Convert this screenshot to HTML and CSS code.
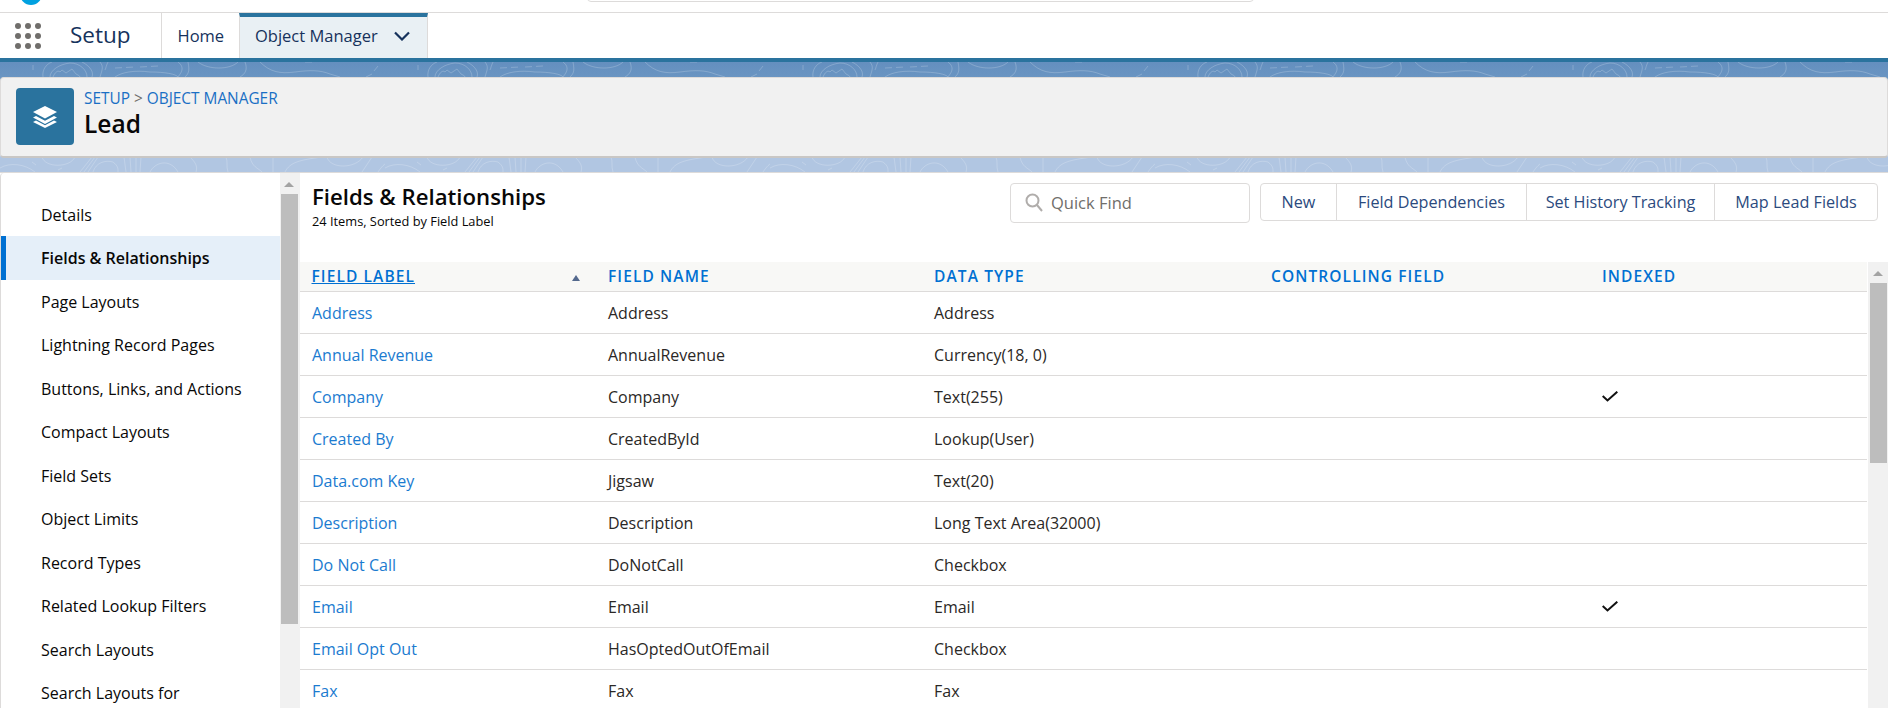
FILE: index.html
```html
<!DOCTYPE html>
<html lang="en">
<head>
<meta charset="utf-8">
<title>Lead | Object Manager</title>
<link rel="stylesheet" href="styles.css">
</head>
<body>
<div class="top-strip">
  <div class="logo-clip"><span class="logo"></span></div>
  <div class="global-search"></div>
</div>
<nav class="nav">
  <div class="launcher">
    <svg width="26" height="26" viewBox="0 0 26 26" fill="#706e6b"><circle cx="3" cy="3" r="3"/><circle cx="13" cy="3" r="3"/><circle cx="23" cy="3" r="3"/><circle cx="3" cy="13" r="3"/><circle cx="13" cy="13" r="3"/><circle cx="23" cy="13" r="3"/><circle cx="3" cy="23" r="3"/><circle cx="13" cy="23" r="3"/><circle cx="23" cy="23" r="3"/></svg>
  </div>
  <div class="app-name">Setup</div>
  <div class="tab">Home</div>
  <div class="tab tab-active">Object Manager
    <svg class="chev" width="16" height="10" viewBox="0 0 16 10" fill="none" stroke="#16325c" stroke-width="2.2"><path d="M1 1.5 8 8.5 15 1.5"/></svg>
  </div>
</nav>
<div class="stage">
  <svg class="texture" width="1888" height="110" aria-hidden="true">
    <defs>
      <pattern id="topo" width="385" height="110" patternUnits="userSpaceOnUse">
        <g fill="none" stroke="#fff" stroke-opacity=".2" stroke-width="1">
          <path d="M33 3V8M43 15C42 8 46 2 52 0M82 0C90 4 94 10 92 15"/>
          <path d="M50 15C50 8 60 2 70 1C80 1 87 8 87 15"/>
          <path d="M53 15C55 10 58 8 60 10L62 8 66 11 72 7 76 12C78 13 80 14 80 15"/>
          <path d="M100 0C104 5 102 8 100 15M108 0C106 4 106 6 105 8"/>
          <path d="M115 6 135 5M140 5 158 4" stroke-dasharray="7 4"/>
          <path d="M115 15C122 10 135 8 150 10C165 10 176 12 178 15"/>
          <path d="M178 0C186 6 180 12 178 15M188 0C190 10 188 12 185 15"/>
          <path d="M198 0C208 8 230 8 238 0M245 0C248 8 245 12 240 15"/>
          <path d="M260 0C270 10 280 12 295 10C310 8 320 8 330 12L340 15M305 0H312"/>
          <path d="M366 15 372 12M374 9 378 4"/>
          <path d="M0 106C10 100 25 102 35 110M42 95C45 106 70 106 75 95M32 100 36 103M58 108 62 106"/>
          <path d="M80 110 92 95M84 110 95 95M88 110 98 95"/>
          <path d="M93 110C96 100 106 98 113 100C118 104 118 106 118 110"/>
          <path d="M124 95 126 110M130 95 131 110M136 95V110M141 95 140 110"/>
          <path d="M150 110C155 100 170 96 178 110M190 95C195 100 198 104 196 110"/>
          <path d="M228 110C226 104 228 100 226 95M250 95C252 105 258 106 262 110M273 95V110"/>
          <path d="M285 110C290 100 300 98 322 95M327 95C330 107 355 107 363 95M362 110 372 95"/>
          <path d="M378 110C382 104 385 102 385 102"/>
        </g>
      </pattern>
    </defs>
    <rect width="1888" height="110" fill="url(#topo)"/>
  </svg>
  <header class="object-bar">
    <div class="object-icon">
      <svg width="24" height="22" viewBox="0 0 24 22" fill="#fff"><path d="M12 0 24 6 12 12.5 0 6Z"/><path d="M3 10 12 14.8 21 10 24 11.6 12 18 0 11.6Z"/><path d="M3 14.6 12 19.2 21 14.6 24 16 12 22 0 16Z"/></svg>
    </div>
    <div class="object-text">
      <div class="crumbs"><a>SETUP</a> <span class="crumb-sep">&gt;</span> <a>OBJECT MANAGER</a></div>
      <h1 class="object-title">Lead</h1>
    </div>
  </header>
  <div class="content">
    <aside class="side">
      <ul class="side-list">
        <li>Details</li>
        <li class="on">Fields &amp; Relationships</li>
        <li>Page Layouts</li>
        <li>Lightning Record Pages</li>
        <li>Buttons, Links, and Actions</li>
        <li>Compact Layouts</li>
        <li>Field Sets</li>
        <li>Object Limits</li>
        <li>Record Types</li>
        <li>Related Lookup Filters</li>
        <li>Search Layouts</li>
        <li>Search Layouts for</li>
      </ul>
      <div class="scrollbar side-scroll"><span class="arrow"></span><span class="thumb"></span></div>
    </aside>
    <main class="main">
      <div class="main-head">
        <div class="heading">
          <h2>Fields &amp; Relationships</h2>
          <p>24 Items, Sorted by Field Label</p>
        </div>
        <div class="tools">
          <div class="quick">
            <svg width="18" height="19" viewBox="0 0 18 19" fill="none" stroke="#b0adab" stroke-width="2"><circle cx="7.5" cy="7.5" r="6"/><path d="M12 12 17 18"/></svg>
            <span>Quick Find</span>
          </div>
          <div class="btn-group">
            <span class="btn btn-new">New</span>
            <span class="btn btn-dep">Field Dependencies</span>
            <span class="btn btn-his">Set History Tracking</span>
            <span class="btn btn-map">Map Lead Fields</span>
          </div>
        </div>
      </div>
      <div class="table-wrap">
        <table class="grid">
          <colgroup><col class="c1"><col class="c2"><col class="c3"><col class="c4"><col class="c5"></colgroup>
          <thead>
            <tr>
              <th class="sorted"><a>FIELD LABEL</a><span class="sort-up"></span></th>
              <th>FIELD NAME</th>
              <th>DATA TYPE</th>
              <th>CONTROLLING FIELD</th>
              <th>INDEXED</th>
            </tr>
          </thead>
          <tbody>
            <tr><td><a>Address</a></td><td>Address</td><td>Address</td><td></td><td></td></tr>
            <tr><td><a>Annual Revenue</a></td><td>AnnualRevenue</td><td>Currency(18, 0)</td><td></td><td></td></tr>
            <tr><td><a>Company</a></td><td>Company</td><td>Text(255)</td><td></td><td><svg class="check" width="16" height="11" viewBox="0 0 16 11" fill="none" stroke="#111" stroke-width="2"><path d="M.7 5 5.5 9.5 15.3 .7"/></svg></td></tr>
            <tr><td><a>Created By</a></td><td>CreatedById</td><td>Lookup(User)</td><td></td><td></td></tr>
            <tr><td><a>Data.com Key</a></td><td>Jigsaw</td><td>Text(20)</td><td></td><td></td></tr>
            <tr><td><a>Description</a></td><td>Description</td><td>Long Text Area(32000)</td><td></td><td></td></tr>
            <tr><td><a>Do Not Call</a></td><td>DoNotCall</td><td>Checkbox</td><td></td><td></td></tr>
            <tr><td><a>Email</a></td><td>Email</td><td>Email</td><td></td><td><svg class="check" width="16" height="11" viewBox="0 0 16 11" fill="none" stroke="#111" stroke-width="2"><path d="M.7 5 5.5 9.5 15.3 .7"/></svg></td></tr>
            <tr><td><a>Email Opt Out</a></td><td>HasOptedOutOfEmail</td><td>Checkbox</td><td></td><td></td></tr>
            <tr><td><a>Fax</a></td><td>Fax</td><td>Fax</td><td></td><td></td></tr>
          </tbody>
        </table>
        <div class="scrollbar table-scroll"><span class="arrow"></span><span class="thumb"></span></div>
      </div>
    </main>
  </div>
</div>
</body>
</html>
```

FILE: styles.css
```css
* { box-sizing: border-box; }
html, body { margin: 0; height: 708px; overflow: hidden; }
body { font-family: "Open Sans", "Noto Sans", sans-serif; background: #fff; color: #16325c; font-size: 14px; }
h1, h2, p, ul { margin: 0; padding: 0; }

.top-strip { height: 13px; border-bottom: 1px solid #dddbda; background: #fff; position: relative; overflow: hidden; }
.logo-clip { height: 5px; overflow: hidden; padding-left: 20px; }
.logo { display: block; width: 22px; height: 22px; margin-top: -17px; border-radius: 50%; background: #00a1e0; }
.global-search { position: absolute; left: 587px; top: -10px; width: 667px; height: 12px; border: 1px solid #dddbda; border-radius: 4px; }

.nav { height: 49px; display: flex; align-items: stretch; background: #fff; border-bottom: 4px solid #2a739e; }
.launcher { width: 56px; padding: 10px 0 0 15px; }
.app-name { width: 106px; padding-left: 14px; font-size: 22.5px; line-height: 43px; color: #16325c; border-right: 1px solid #dddbda; font-weight: 400; }
.tab { display: flex; align-items: center; font-size: 16.5px; padding: 0 15.5px; color: #16325c; }
.tab:nth-child(3) { width: 77px; }
.tab-active { width: 189px; padding: 0 0 4px 15px; background: #e9f0f4; border-top: 4px solid #2a739e; border-left: 1px solid #dddbda; border-right: 1px solid #dddbda; position: relative; white-space: nowrap; }
.chev { margin-left: 16px; flex: none; }

.stage { height: 646px; position: relative; background: linear-gradient(#648fbf 0, #6a95c2 16px, #b1c6e2 95px, #b1c6e2 110px); }
.texture { position: absolute; left: 0; top: 0; }

.object-bar { position: relative; top: 15px; height: 81px; display: flex; align-items: flex-start; background: #f1f1f1; border: 1px solid #dddbda; border-bottom: 2px solid #c9c7c5; border-radius: 4px; padding: 10px 0 0 15px; }
.object-icon { width: 58px; height: 57px; border-radius: 4px; background: #2a739e; display: flex; align-items: center; justify-content: center; }
.object-text { padding: 1px 0 0 10px; }
.crumbs { font-size: 15.4px; line-height: 20px; color: #706e6b; }
.crumbs a { color: #1a6fc4; }
.object-title { font-size: 24.5px; line-height: 29px; font-weight: 600; color: #080707; }

.content { position: absolute; left: 0; right: 0; top: 110px; bottom: 0; display: flex; background: #fff; border-top: 1px solid #dddbda; }
.side { width: 300px; flex: none; display: flex; border-left: 1px solid #dddbda; position: relative; border-radius: 4px 0 0 0; overflow: hidden; }
.side-list { list-style: none; flex: 1; padding-top: 19.5px; height: 536px; overflow: hidden; }
.side-list li { height: 43.5px; line-height: 45px; padding-left: 40px; font-size: 16px; color: #080707; white-space: nowrap; }
.side-list li.on { background: #e5eff9; border-left: 5px solid #0070d2; padding-left: 35px; font-weight: 600; }
.scrollbar { width: 20px; background: #f1f1f1; flex: none; position: relative; }
.arrow { position: absolute; left: 4px; top: 9px; border-left: 5px solid transparent; border-right: 5px solid transparent; border-bottom: 5px solid #a3a3a3; }
.thumb { position: absolute; left: 1px; right: 2px; background: #bdbdbd; }
.side-scroll .thumb { top: 21px; height: 430px; }

.main { flex: 1; min-width: 0; display: flex; flex-direction: column; }
.main-head { height: 89px; display: flex; justify-content: space-between; padding: 10px 10px 0 12px; }
.heading h2 { font-size: 22.2px; line-height: 28px; font-weight: 600; color: #080707; }
.heading p { font-size: 12.8px; line-height: 20px; color: #080707; }
.tools { display: flex; gap: 10px; align-items: flex-start; }
.quick { width: 240px; height: 40px; border: 1px solid #dddbda; border-radius: 4px; display: flex; align-items: center; gap: 8px; padding: 0 0 1px 14px; font-size: 16.5px; color: #706e6b; }
.btn-group { height: 38px; width: 618px; display: flex; border: 1px solid #dddbda; border-radius: 4px; background: #fff; }
.btn { display: flex; align-items: center; justify-content: center; padding-bottom: 1px; font-size: 16.2px; color: #2b4a7e; border-right: 1px solid #dddbda; white-space: nowrap; }
.btn-new { width: 76px; }
.btn-dep { width: 190px; }
.btn-his { width: 188px; }
.btn-map { flex: 1; border-right: 0; }

.table-wrap { flex: 1; display: flex; justify-content: space-between; min-height: 0; overflow: hidden; }
.grid { width: 1567px; table-layout: fixed; border-collapse: collapse; flex: none; align-self: flex-start; }
.c1 { width: 297px; } .c2 { width: 326px; } .c3 { width: 337px; } .c4 { width: 331px; }
.grid th { height: 29px; background: #f8f8f6; text-align: left; color: #0070d2; font-size: 15.5px; font-weight: 600; letter-spacing: 1.1px; padding: 0 0 0 11px; border-bottom: 1px solid #dddbda; position: relative; }
.grid th:first-child { padding-left: 11.5px; }
.grid th a { text-decoration: underline; }
.sort-up { position: absolute; left: 272px; top: 13px; border-left: 4px solid transparent; border-right: 4px solid transparent; border-bottom: 6px solid #54698d; }
.grid td { height: 42px; padding: 1px 0 0 11px; border-bottom: 1px solid #dddbda; font-size: 16px; color: #2b2826; white-space: nowrap; }
.grid td:first-child { padding-left: 12px; }
.grid td a { color: #1b7bd0; }
.check { display: block; }
.table-scroll .arrow { left: 5px; top: 9px; }
.table-scroll .thumb { top: 21px; height: 180px; left: 2px; right: 1px; }
```
